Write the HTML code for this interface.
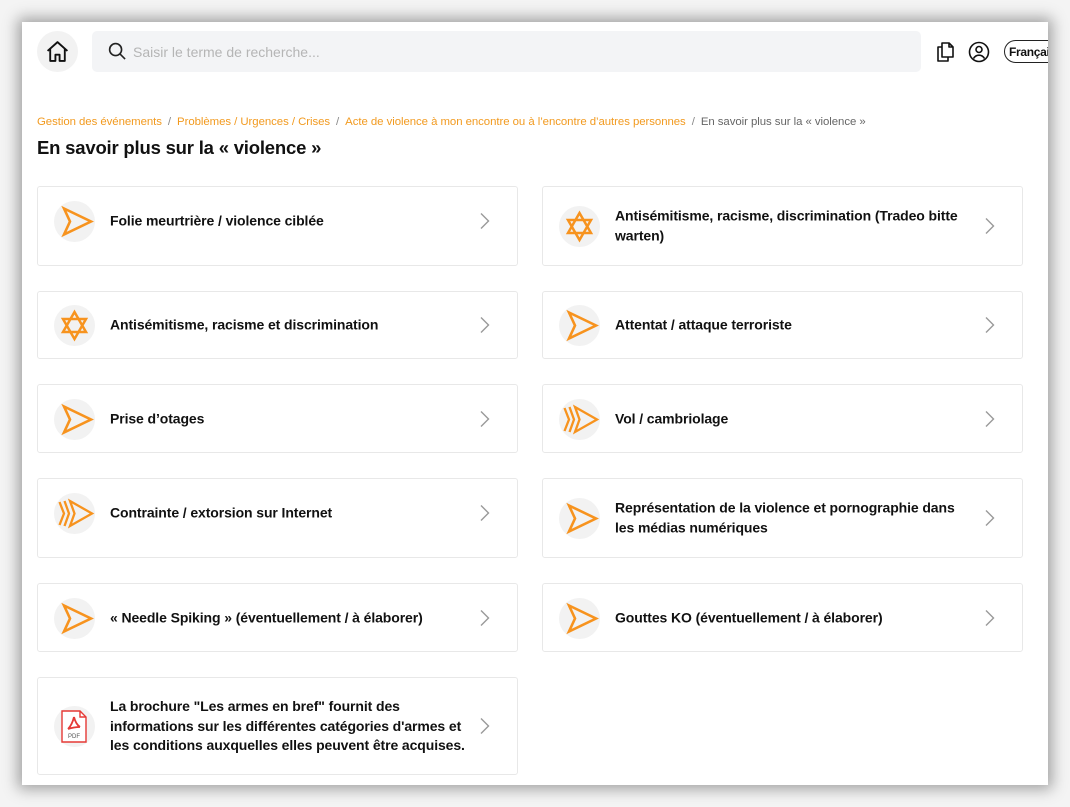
<!DOCTYPE html>
<html><head><meta charset="utf-8">
<style>
*{box-sizing:border-box;margin:0;padding:0}
html,body{width:1070px;height:807px;overflow:hidden;background:#f4f4f4;font-family:"Liberation Sans",sans-serif}
.page{position:absolute;left:22px;top:22px;width:1026px;height:763px;background:#fff;box-shadow:0 0 14px 4px rgba(0,0,0,.35);overflow:hidden}
.home{position:absolute;left:15px;top:9px;width:41px;height:41px;border-radius:50%;background:#f2f2f2}
.home svg{position:absolute;left:8px;top:8px}
.search{position:absolute;left:70px;top:9px;width:829px;height:41px;background:#f3f4f6;border-radius:5px}
.search svg{position:absolute;left:16px;top:11px}
.search span{position:absolute;left:41px;top:13px;font-size:14px;color:#b5b5b5}
.docs{position:absolute;left:912px;top:19px}
.user{position:absolute;left:946px;top:19px}
.lang{position:absolute;left:982px;top:18px;height:23px;width:70px;border:1.5px solid #222;border-radius:12px;font-size:12px;font-weight:bold;padding:4px 0 0 4px;color:#111;letter-spacing:-.3px}
.bc{position:absolute;left:15px;top:94px;font-size:11.4px;color:#f29a1f;white-space:nowrap;letter-spacing:-.05px}
.bc .s{color:#888;margin:0 6px}
.bc .c{color:#666}
h1{position:absolute;left:15px;top:115px;font-size:18.5px;font-weight:bold;color:#111;letter-spacing:-.2px}
.card{position:absolute;width:481px;border:1px solid #e8e8e8;border-radius:3px;background:#fff}
.ic{position:absolute;left:16px;top:50%;margin-top:-20px;width:41px;height:41px;border-radius:50%;background:#f2f2f2}
.ic svg{position:absolute;left:0;top:0}
.t{position:absolute;left:72px;right:48px;top:50%;transform:translateY(-50%);font-size:14px;font-weight:bold;color:#111;line-height:19.5px;letter-spacing:-.1px}
.ch{position:absolute;right:26px;top:50%;margin-top:-9px}
.up .ic{margin-top:-25px}.up .t{margin-top:-5px}.up .ch{margin-top:-14px}
</style></head><body>
<div class="page">
<div class="home"><svg width="25" height="25" viewBox="0 0 24 24" fill="none" stroke="#111" stroke-width="1.8" stroke-linejoin="round"><path d="M2.5 11.5L12 3l9.5 8.5M5 9.5V21h5v-6h4v6h5V9.5"/></svg></div>
<div class="search"><svg width="19" height="19" viewBox="0 0 20 20" fill="none" stroke="#222" stroke-width="1.7"><circle cx="8" cy="8" r="6.3"/><path d="M12.6 12.6L18 18"/></svg><span>Saisir le terme de recherche...</span></div>
<svg class="docs" width="22" height="22" viewBox="0 0 22 22" fill="none" stroke="#111" stroke-width="1.6" stroke-linejoin="round"><path d="M8 2h7l4 4v10H8z M15 2v4h4"/><path d="M8 6H4v14h10v-4"/></svg>
<svg class="user" width="22" height="22" viewBox="0 0 22 22" fill="none" stroke="#111" stroke-width="1.6"><circle cx="11" cy="11" r="9.5"/><circle cx="11" cy="8.5" r="3"/><path d="M5.5 17.5c1.5-2.5 3.3-3.3 5.5-3.3s4 .8 5.5 3.3"/></svg>
<div class="lang">Français</div>
<div class="bc">Gestion des événements<span class="s">/</span>Problèmes / Urgences / Crises<span class="s">/</span>Acte de violence à mon encontre ou à l’encontre d’autres personnes<span class="s">/</span><span class="c">En savoir plus sur la « violence »</span></div>
<h1>En savoir plus sur la « violence »</h1>

<svg width="0" height="0" style="position:absolute">
<defs>
<g id="arr"><path d="M10 7.5L37 20.5 10 33.5 16 20.5z" fill="none" stroke="#f7931e" stroke-width="2.6" stroke-linejoin="miter"/></g>
<g id="arr3" fill="none" stroke="#f7931e" stroke-width="2.3" stroke-linejoin="miter"><path d="M16 8L38 20.5 16 33 20.5 20.5z"/><path d="M10.5 8L15 20.5 10.5 33"/><path d="M5.5 9L10 20.5 5.5 32"/></g>
<g id="star" fill="none" stroke="#f7931e" stroke-width="2.5" stroke-linejoin="miter"><path d="M20.5 7L32 27H9z"/><path d="M20.5 34L9 14H32z"/></g>
<g id="chev"><path d="M2 1.5l7.5 7.5-7.5 7.5" fill="none" stroke="#999" stroke-width="1.4"/></g>
</defs></svg>

<div class="card up" style="left:15px;top:164px;height:80px"><div class="ic"><svg width="41" height="41"><use href="#arr"/></svg></div><div class="t">Folie meurtrière / violence ciblée</div><svg class="ch" width="12" height="18"><use href="#chev"/></svg></div>
<div class="card" style="left:520px;top:164px;height:80px"><div class="ic"><svg width="41" height="41"><use href="#star"/></svg></div><div class="t">Antisémitisme, racisme, discrimination (Tradeo bitte warten)</div><svg class="ch" width="12" height="18"><use href="#chev"/></svg></div>

<div class="card" style="left:15px;top:269px;height:68px"><div class="ic"><svg width="41" height="41"><use href="#star"/></svg></div><div class="t">Antisémitisme, racisme et discrimination</div><svg class="ch" width="12" height="18"><use href="#chev"/></svg></div>
<div class="card" style="left:520px;top:269px;height:68px"><div class="ic"><svg width="41" height="41"><use href="#arr"/></svg></div><div class="t">Attentat / attaque terroriste</div><svg class="ch" width="12" height="18"><use href="#chev"/></svg></div>

<div class="card" style="left:15px;top:362px;height:69px"><div class="ic"><svg width="41" height="41"><use href="#arr"/></svg></div><div class="t">Prise d’otages</div><svg class="ch" width="12" height="18"><use href="#chev"/></svg></div>
<div class="card" style="left:520px;top:362px;height:69px"><div class="ic"><svg width="41" height="41"><use href="#arr3"/></svg></div><div class="t">Vol / cambriolage</div><svg class="ch" width="12" height="18"><use href="#chev"/></svg></div>

<div class="card up" style="left:15px;top:456px;height:80px"><div class="ic"><svg width="41" height="41"><use href="#arr3"/></svg></div><div class="t">Contrainte / extorsion sur Internet</div><svg class="ch" width="12" height="18"><use href="#chev"/></svg></div>
<div class="card" style="left:520px;top:456px;height:80px"><div class="ic"><svg width="41" height="41"><use href="#arr"/></svg></div><div class="t">Représentation de la violence et pornographie dans les médias numériques</div><svg class="ch" width="12" height="18"><use href="#chev"/></svg></div>

<div class="card" style="left:15px;top:561px;height:69px"><div class="ic"><svg width="41" height="41"><use href="#arr"/></svg></div><div class="t">« Needle Spiking » (éventuellement / à élaborer)</div><svg class="ch" width="12" height="18"><use href="#chev"/></svg></div>
<div class="card" style="left:520px;top:561px;height:69px"><div class="ic"><svg width="41" height="41"><use href="#arr"/></svg></div><div class="t">Gouttes KO (éventuellement / à élaborer)</div><svg class="ch" width="12" height="18"><use href="#chev"/></svg></div>

<div class="card" style="left:15px;top:655px;height:98px"><div class="ic"><svg width="41" height="41"><path d="M8 5h18l6 6v25H8z" fill="#fff" stroke="#e53935" stroke-width="1.4"/><path d="M26 5v6h6" fill="none" stroke="#e53935" stroke-width="1.4"/><path d="M20 11c-1 4-3 9-6 12m6-12c1 4 3 8 6 10m-12 2c3-1 8-2 12-2" fill="none" stroke="#e53935" stroke-width="1.8"/><text x="20" y="32" font-size="6" text-anchor="middle" fill="#555" font-family="Liberation Sans">PDF</text></svg></div><div class="t" style="right:10px;white-space:nowrap">La brochure "Les armes en bref" fournit des<br>informations sur les différentes catégories d'armes et<br>les conditions auxquelles elles peuvent être acquises.</div><svg class="ch" width="12" height="18"><use href="#chev"/></svg></div>
</div>
</body></html>
